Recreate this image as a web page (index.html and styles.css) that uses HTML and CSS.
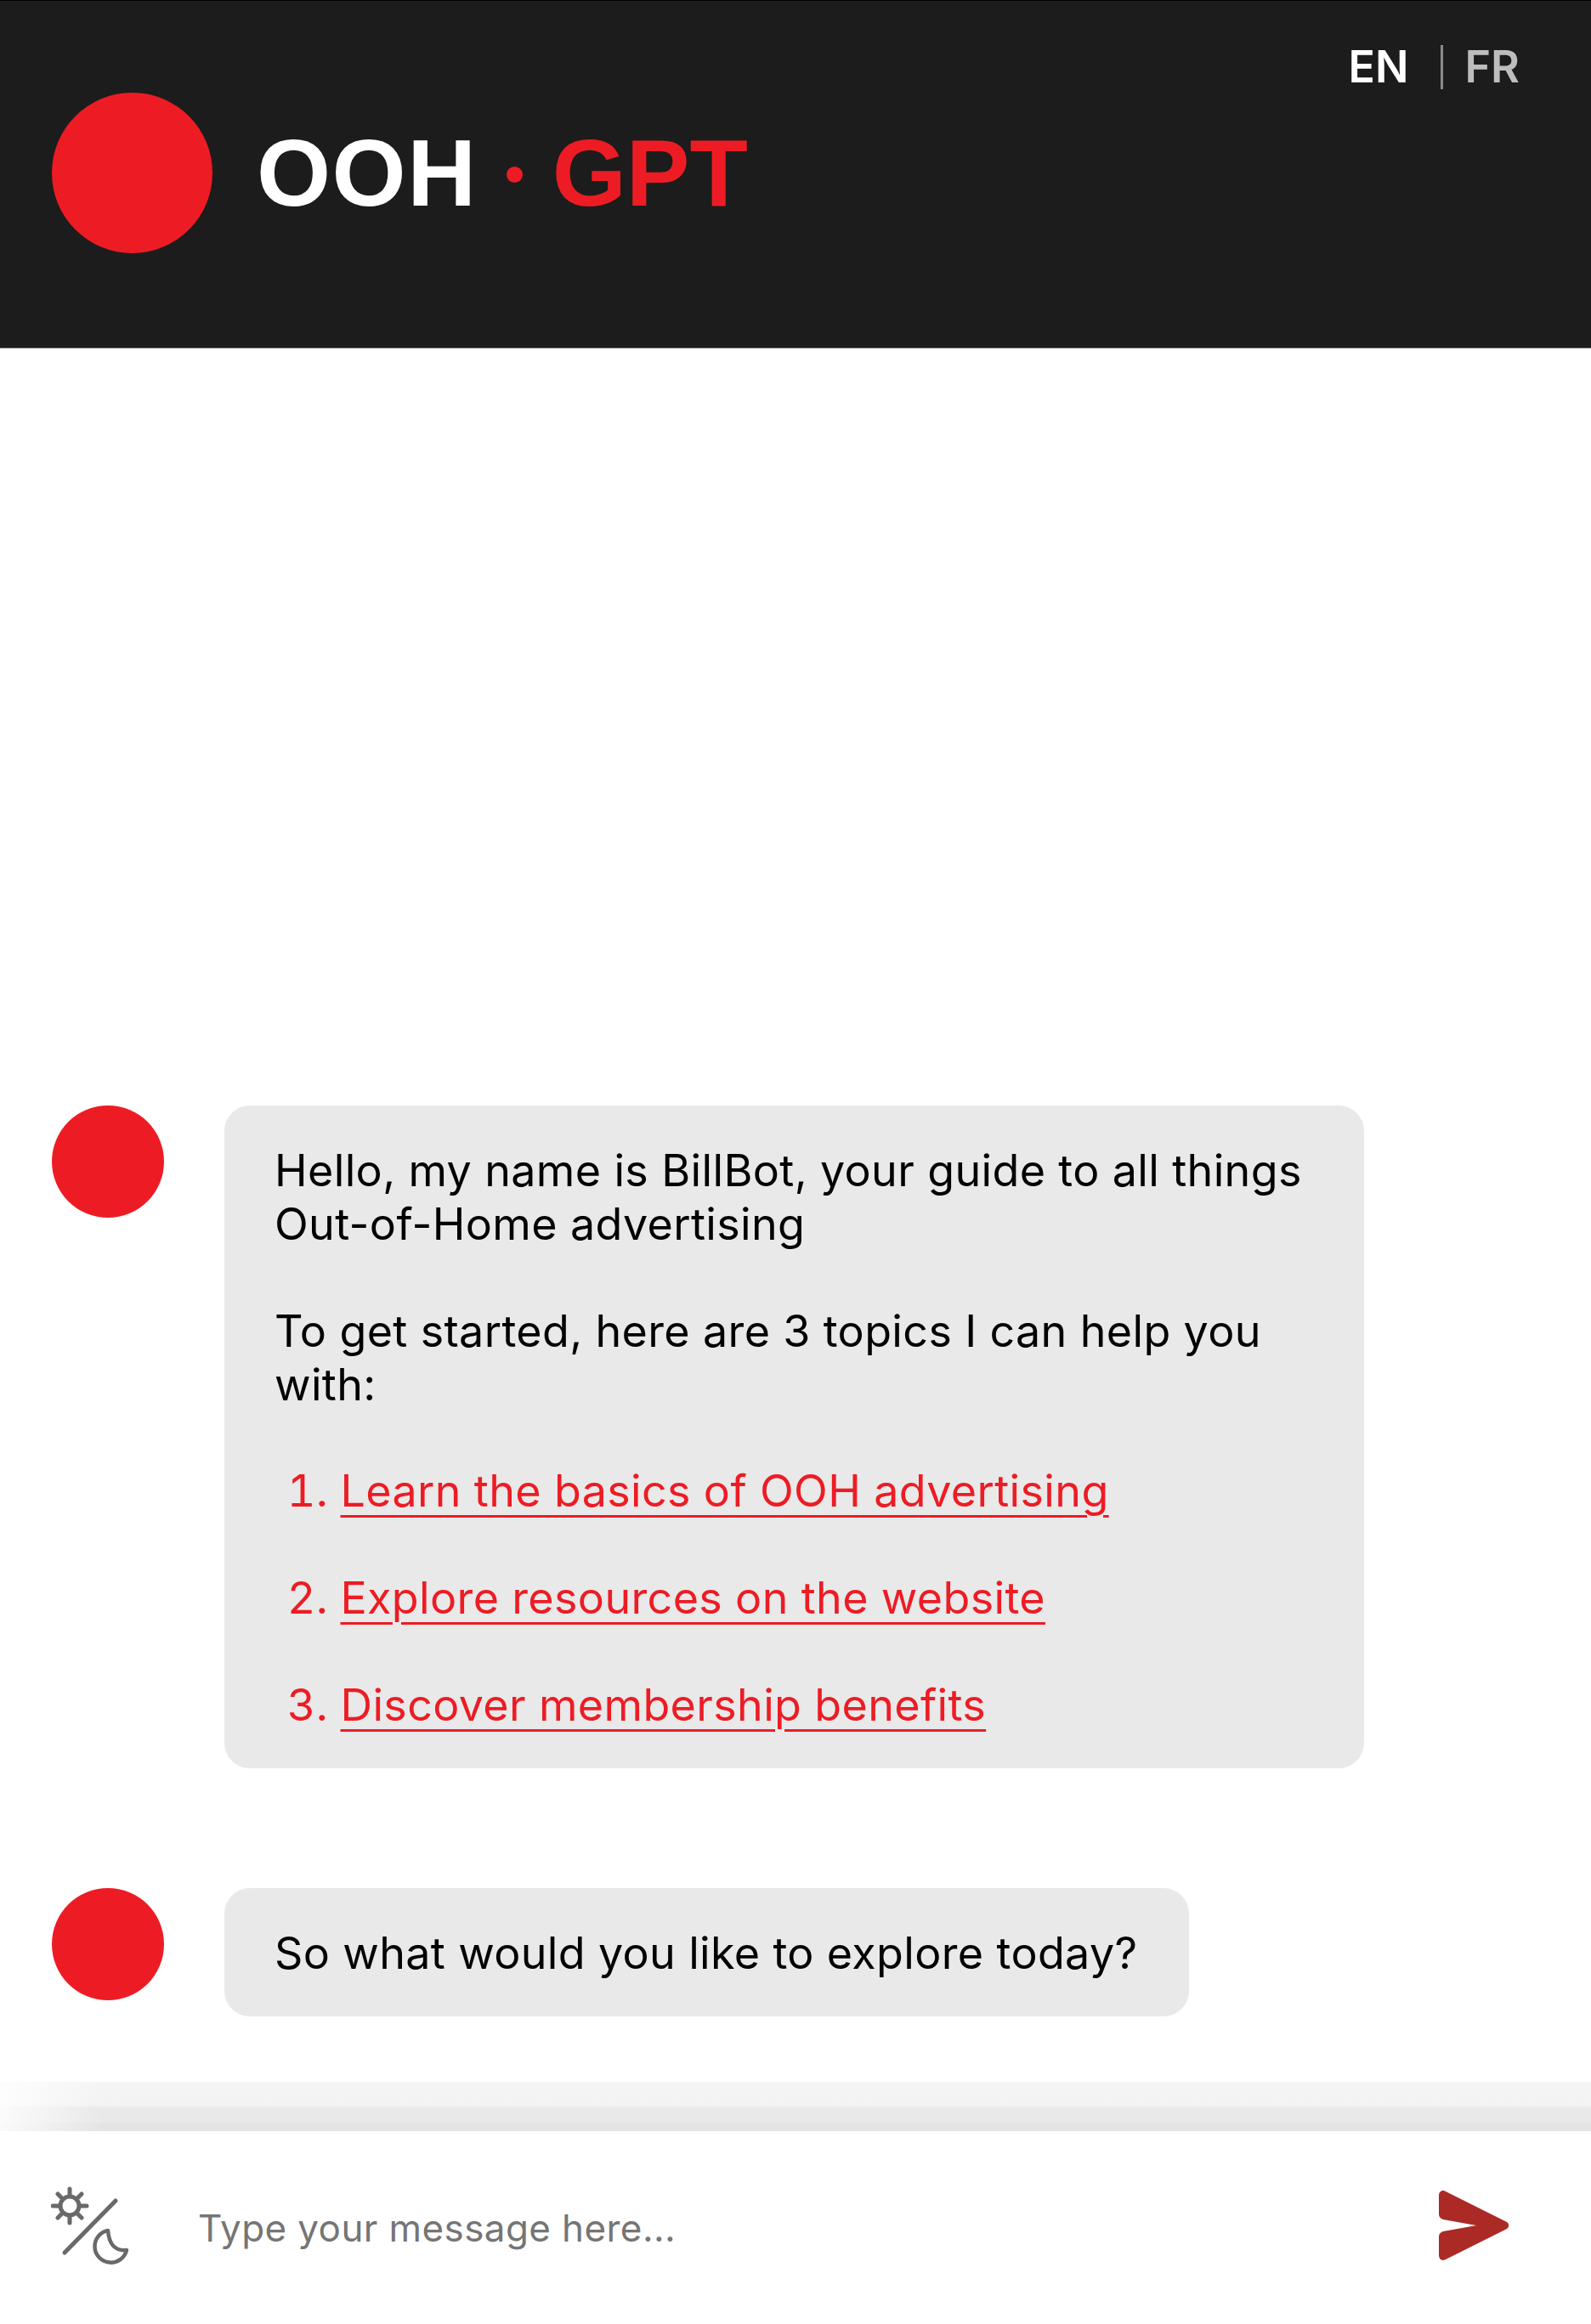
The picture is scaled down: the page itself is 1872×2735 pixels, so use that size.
FILE: index.html
```html
<!DOCTYPE html>
<html lang="en">
<head>
<meta charset="utf-8">
<title>OOH GPT</title>
<link rel="stylesheet" href="styles.css">
</head>
<body>
<div class="app">
  <header class="header">
    <div class="brand">
      <div class="brand-mark"></div>
      <div class="brand-name">OOH<span class="brand-dot"></span><span class="brand-accent">GPT</span></div>
    </div>
    <nav class="lang">
      <span class="lang-item lang-active">EN</span>
      <span class="lang-divider"></span>
      <span class="lang-item lang-muted">FR</span>
    </nav>
  </header>
  <main class="chat">
    <div class="message">
      <div class="avatar"></div>
      <div class="bubble bubble-wide">
        <p class="para">Hello, my name is BillBot, your guide to all things Out-of-Home advertising</p>
        <p class="para">To get started, here are 3 topics I can help you with:</p>
        <ol class="topics">
          <li class="topic"><a class="topic-link" href="#">Learn the basics of OOH advertising</a></li>
          <li class="topic"><a class="topic-link" href="#">Explore resources on the website</a></li>
          <li class="topic"><a class="topic-link" href="#">Discover membership benefits</a></li>
        </ol>
      </div>
    </div>
    <div class="message">
      <div class="avatar"></div>
      <div class="bubble">So what would you like to explore today?</div>
    </div>
  </main>
  <div class="shade"></div>
  <footer class="composer">
    <button class="icon-btn theme-btn" type="button" aria-label="Toggle theme">
      <svg class="theme-icon" viewBox="0 0 100 100" width="100" height="100" fill="none" stroke="#696969" stroke-width="5" stroke-linecap="round" stroke-linejoin="round">
        <circle cx="22" cy="24" r="11"></circle>
        <path d="M22 4v8M22 36v8M2 24h8M34 24h8M8 10l5.500 5.500M30.500 32.500L36 38M8 38l5.500-5.500M30.500 15.500L36 10"></path>
        <path d="M76 18L16 79"></path>
        <path class="moon" d="M67 53A19 19 0 1 0 89 76Q69 78 67 53z"></path>
      </svg>
    </button>
    <div class="placeholder">Type your message here...</div>
    <button class="icon-btn send-btn" type="button" aria-label="Send">
      <svg class="send-icon" viewBox="0 0 82 82" width="82" height="82">
        <path d="M7 0.500L80 37c3 2 3 6 0 8L7 81.500C3 83 0 80 0 76V54c0-3 2-5 5-6l39-7L5 34c-3-1-5-3-5-6V6C0 2 3-1 7 0.500z" fill="#ab2a25"></path>
      </svg>
    </button>
  </footer>
</div>
</body>
</html>
```
FILE: styles.css
```css
* { box-sizing: border-box; }
html, body { margin: 0; padding: 0; background: #fff; }
.app {
  width: 1872px;
  height: 2735px;
  display: flex;
  flex-direction: column;
  font-family: Inter, "Liberation Sans", sans-serif;
  overflow: hidden;
}
.header {
  height: 410px;
  flex: none;
  background: #1c1c1c;
  border-top: 1px solid #000;
  border-bottom: 1px solid #666;
  display: flex;
  justify-content: space-between;
  align-items: flex-start;
  padding: 0 84px 0 61px;
}
.brand {
  display: flex;
  align-items: center;
  gap: 52px;
  align-self: center;
  margin-bottom: 3px;
}
.brand-mark {
  width: 189px;
  height: 189px;
  border-radius: 50%;
  background: #ed1c24;
}
.brand-name {
  font-family: "Liberation Sans", Arial, sans-serif;
  font-weight: 700;
  font-size: 112px;
  line-height: 1;
  letter-spacing: 1.500px;
  color: #fff;
  white-space: nowrap;
}
.brand-dot {
  display: inline-block;
  width: 19px;
  height: 19px;
  border-radius: 50%;
  background: #ed1c24;
  margin: 0 35px 0 34px;
  vertical-align: 27px;
}
.brand-accent {
  color: #ed1c24;
  letter-spacing: 0;
}
.lang {
  display: flex;
  align-items: center;
  margin-top: 52px;
  height: 52px;
}
.lang-item {
  font-size: 52px;
  font-weight: 600;
  line-height: 52px;
}
.lang-active { color: #fff; }
.lang-muted { color: #bdbdbd; }
.lang-divider {
  width: 3px;
  height: 52px;
  background: #8a8a8a;
  margin: 0 25.500px 0 37.500px;
}
.chat {
  flex: 1;
  display: flex;
  flex-direction: column;
  justify-content: flex-end;
  gap: 141px;
  padding: 0 61px 77px;
  min-height: 0;
}
.message {
  display: flex;
  align-items: flex-start;
  gap: 71px;
}
.avatar {
  width: 132px;
  height: 132px;
  flex: none;
  border-radius: 50%;
  background: #ed1c24;
}
.bubble {
  background: #e9e9e9;
  border-radius: 30px;
  padding: 45px 61px 43px 59px;
  font-size: 52px;
  letter-spacing: 0.36px;
  line-height: normal;
  color: #000;
  width: fit-content;
}
.bubble-wide { width: 1341px; }
.para { margin: 0 0 1.2em; }
.topics {
  margin: 0;
  padding: 0 0 0 77.500px;
  color: #ed1c24;
}
.topic { margin-top: 63px; }
.topic:first-child { margin-top: 0; }
.topic-link {
  color: #ed1c24;
  text-decoration: underline;
  text-decoration-thickness: 3px;
  text-underline-offset: 10px;
}
.shade {
  height: 58px;
  flex: none;
  background:
    linear-gradient(90deg, rgba(255,255,255,.85) 0, rgba(255,255,255,0) 120px),
    linear-gradient(180deg, #f5f5f5 0, #f3f3f3 28px, #e9e9e9 30px, #e9e9e9 47px, #e4e4e4 50px, #e4e4e4 100%);
}
.composer {
  flex: none;
  height: 227px;
  background: #fff;
  display: flex;
  align-items: center;
  padding: 0 97px 0 60px;
}
.icon-btn {
  border: 0;
  padding: 0;
  background: none;
  display: flex;
  flex: none;
}
.send-btn { margin-bottom: 5px; }
.theme-icon { display: block; }
.moon { stroke-width: 4.500; }
.placeholder {
  flex: 1;
  margin-left: 73px;
  font-size: 44px;
  letter-spacing: 0.4px;
  color: #757575;
}
.send-icon { display: block; }
```
